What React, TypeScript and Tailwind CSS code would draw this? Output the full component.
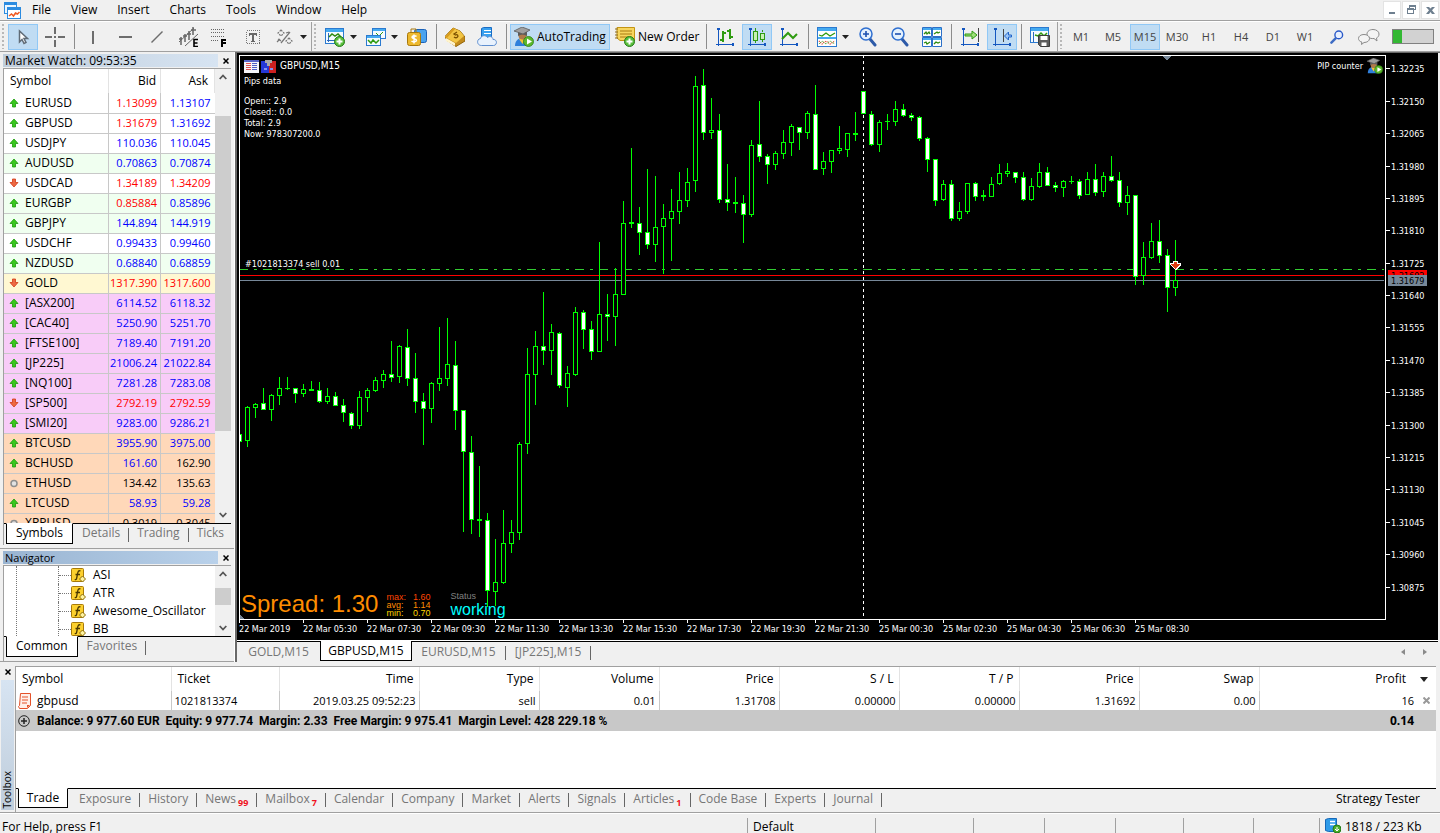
import React from 'react';
import clsx from 'clsx';

type Tone = 'up' | 'down' | 'flat';

interface Quote {
  symbol: string;
  bid: string;
  ask: string;
  trend: Tone;
  bidTone: Tone;
  askTone: Tone;
  bg: string;
}

const WHITE = 'bg-white';
const MINT = 'bg-[#f0fff0]';
const GOLD = 'bg-[#fff8d2]';
const PINK = 'bg-[#f8ccf8]';
const PEACH = 'bg-[#ffd8b9]';

const q = (symbol: string, bid: string, ask: string, trend: Tone, bidTone: Tone, askTone: Tone, bg: string): Quote => ({
  symbol, bid, ask, trend, bidTone, askTone, bg,
});

const quotes: Quote[] = [
  q('EURUSD', '1.13099', '1.13107', 'up', 'down', 'up', WHITE),
  q('GBPUSD', '1.31679', '1.31692', 'up', 'down', 'up', WHITE),
  q('USDJPY', '110.036', '110.045', 'up', 'up', 'up', WHITE),
  q('AUDUSD', '0.70863', '0.70874', 'up', 'up', 'up', MINT),
  q('USDCAD', '1.34189', '1.34209', 'down', 'down', 'down', WHITE),
  q('EURGBP', '0.85884', '0.85896', 'up', 'down', 'up', MINT),
  q('GBPJPY', '144.894', '144.919', 'up', 'up', 'up', MINT),
  q('USDCHF', '0.99433', '0.99460', 'up', 'up', 'up', WHITE),
  q('NZDUSD', '0.68840', '0.68859', 'up', 'up', 'up', MINT),
  q('GOLD', '1317.390', '1317.600', 'down', 'down', 'down', GOLD),
  q('[ASX200]', '6114.52', '6118.32', 'up', 'up', 'up', PINK),
  q('[CAC40]', '5250.90', '5251.70', 'up', 'up', 'up', PINK),
  q('[FTSE100]', '7189.40', '7191.20', 'up', 'up', 'up', PINK),
  q('[JP225]', '21006.24', '21022.84', 'up', 'up', 'up', PINK),
  q('[NQ100]', '7281.28', '7283.08', 'up', 'up', 'up', PINK),
  q('[SP500]', '2792.19', '2792.59', 'down', 'down', 'down', PINK),
  q('[SMI20]', '9283.00', '9286.21', 'up', 'up', 'up', PINK),
  q('BTCUSD', '3955.90', '3975.00', 'up', 'up', 'up', PEACH),
  q('BCHUSD', '161.60', '162.90', 'up', 'up', 'flat', PEACH),
  q('ETHUSD', '134.42', '135.63', 'flat', 'flat', 'flat', PEACH),
  q('LTCUSD', '58.93', '59.28', 'up', 'up', 'up', PEACH),
  q('XRPUSD', '0.3019', '0.3045', 'flat', 'flat', 'flat', PEACH),
];

const toneClass: Record<Tone, string> = {
  up: 'text-[#0000ff]',
  down: 'text-[#ff0000]',
  flat: 'text-black',
};

// one candle per 8px: high, body top, body bottom, low, bearish flag
type Candle = [number, number, number, number, number];

const candles: Candle[] = [
  [434, 434, 442, 442, 1], [406, 407, 441, 447, 0], [403, 404, 408, 418, 0], [388, 403, 410, 410, 1],
  [394, 395, 410, 421, 0], [377, 388, 396, 405, 0], [377, 388, 389, 390, 0], [388, 388, 394, 403, 1],
  [384, 389, 394, 397, 0], [381, 389, 391, 391, 0], [382, 390, 402, 403, 1], [388, 396, 402, 404, 0],
  [392, 396, 406, 406, 1], [399, 405, 413, 422, 1], [412, 413, 426, 429, 1], [391, 397, 426, 429, 0],
  [388, 390, 398, 412, 0], [377, 380, 391, 392, 0], [370, 374, 381, 388, 0], [341, 374, 378, 382, 1],
  [345, 346, 377, 383, 0], [329, 347, 379, 386, 1], [353, 378, 402, 413, 1], [393, 401, 409, 445, 1],
  [382, 383, 409, 423, 0], [327, 378, 384, 391, 0], [318, 364, 379, 386, 0], [341, 365, 411, 430, 1],
  [410, 410, 452, 532, 1], [436, 452, 520, 534, 1], [466, 519, 521, 537, 0], [513, 520, 591, 607, 1],
  [539, 582, 592, 606, 0], [510, 543, 583, 584, 0], [520, 532, 544, 553, 0], [442, 444, 533, 540, 0],
  [348, 374, 444, 454, 0], [331, 346, 375, 405, 0], [292, 346, 351, 365, 1], [324, 332, 351, 375, 0],
  [332, 333, 386, 388, 1], [366, 373, 388, 407, 0], [307, 312, 375, 376, 0], [310, 312, 330, 349, 1],
  [321, 329, 352, 360, 1], [242, 314, 352, 352, 0], [294, 314, 317, 341, 1], [268, 294, 317, 346, 0],
  [201, 223, 295, 295, 0], [148, 222, 224, 228, 0], [207, 223, 233, 255, 1], [169, 232, 245, 249, 1],
  [176, 227, 245, 262, 0], [204, 218, 227, 274, 0], [189, 211, 219, 261, 0], [172, 200, 212, 224, 0],
  [168, 182, 201, 207, 0], [76, 86, 181, 192, 0], [69, 85, 133, 140, 1], [98, 130, 133, 139, 0],
  [114, 130, 200, 203, 1], [164, 199, 203, 211, 1], [177, 202, 204, 213, 0], [195, 203, 215, 243, 1],
  [140, 145, 215, 217, 0], [101, 144, 157, 162, 1], [154, 156, 165, 184, 1], [151, 153, 165, 170, 0],
  [130, 142, 154, 159, 0], [124, 126, 143, 156, 0], [127, 127, 133, 150, 1], [111, 113, 133, 139, 0],
  [85, 114, 170, 170, 1], [152, 161, 169, 175, 0], [150, 150, 162, 173, 0], [126, 148, 151, 154, 0],
  [133, 133, 150, 157, 0], [112, 133, 135, 141, 0], [91, 91, 114, 114, 1], [111, 114, 145, 146, 1],
  [120, 122, 145, 152, 0], [114, 121, 122, 130, 0], [101, 109, 122, 126, 0], [104, 109, 116, 117, 1],
  [113, 115, 118, 121, 1], [116, 117, 139, 141, 1], [137, 138, 160, 172, 1], [159, 159, 201, 206, 1],
  [180, 184, 200, 201, 0], [180, 184, 219, 221, 1], [202, 211, 219, 221, 0], [183, 183, 212, 214, 0],
  [182, 183, 197, 201, 1], [190, 195, 197, 201, 0], [177, 184, 197, 197, 0], [164, 173, 184, 185, 0],
  [163, 171, 174, 177, 0], [172, 172, 178, 183, 1], [172, 177, 200, 201, 1], [178, 186, 200, 201, 0],
  [163, 172, 187, 188, 0], [167, 172, 186, 186, 1], [182, 185, 188, 192, 1], [180, 181, 188, 197, 0],
  [176, 181, 182, 184, 0], [179, 181, 196, 199, 1], [172, 179, 195, 195, 0], [164, 179, 193, 196, 1],
  [172, 176, 192, 197, 0], [156, 176, 181, 182, 1], [172, 180, 203, 207, 1], [186, 195, 203, 215, 0],
  [195, 195, 277, 285, 1], [242, 257, 276, 285, 0], [223, 241, 258, 259, 0], [220, 241, 256, 263, 1],
  [249, 255, 288, 312, 1], [240, 280, 288, 296, 0],
];

const prices: [string, number][] = [
  ['1.32235', 68], ['1.32150', 101], ['1.32065', 133], ['1.31980', 166], ['1.31895', 198], ['1.31810', 230],
  ['1.31725', 263], ['1.31640', 295], ['1.31555', 327], ['1.31470', 360], ['1.31385', 392], ['1.31300', 425],
  ['1.31215', 457], ['1.31130', 489], ['1.31045', 522], ['1.30960', 554], ['1.30875', 587],
];

const times = [
  '22 Mar 2019', '22 Mar 05:30', '22 Mar 07:30', '22 Mar 09:30', '22 Mar 11:30', '22 Mar 13:30', '22 Mar 15:30',
  '22 Mar 17:30', '22 Mar 19:30', '22 Mar 21:30', '25 Mar 00:30', '25 Mar 02:30', '25 Mar 04:30', '25 Mar 06:30',
  '25 Mar 08:30',
];

const Svg = ({ children, size = 20, crisp = false }: { children: React.ReactNode; size?: number; crisp?: boolean }) => (
  <svg width={size} height={size} viewBox="0 0 20 20" fill="none" className="shrink-0" shapeRendering={crisp ? 'crispEdges' : 'auto'} aria-hidden="true">
    {children}
  </svg>
);

const Student = ({ size = 20 }: { size?: number }) => (
  <Svg size={size}>
    <path d="M1 19c0-5 3-8 7-8 5 0 7 3 7 8z" fill="#2f7fdb" />
    <path d="M5 12l3.500 5 3-5z" fill="#f3c13a" />
    <circle cx="8.500" cy="8.500" r="4" fill="#b07a4a" />
    <path d="M4 5v4c3-2 6-2 9 0V5z" fill="#5c5c5c" />
    <path d="M0 4l8-4 8 3-7 4z" fill="#a0a0a0" stroke="#5a5a5a" strokeWidth=".8" />
    <circle cx="14.500" cy="14.500" r="5" fill="#5cb82c" stroke="#2c8012" strokeWidth=".8" />
    <path d="M13 11.500v6l5-3z" fill="#fff" />
  </Svg>
);

const PlusBadge = () => (
  <>
    <circle cx="14.500" cy="14.500" r="5" fill="#5abf3c" stroke="#237a17" />
    <path d="M14.500 11.500v6M11.500 14.500h6" stroke="#fff" strokeWidth="2" />
  </>
);

const Axes = ({ children }: { children?: React.ReactNode }) => (
  <Svg crisp>
    <path d="M3 1v18M1 17h18" stroke="#1457c0" />
    <path d="M2 1h3v2H2zM17 16h2v3h-2z" fill="#1457c0" />
    {children}
  </Svg>
);

const icons = {
  cursor: (
    <Svg><path d="M6.500 4v11l2.500-2.500 2 4 2-1-2-4h3.500z" fill="#fff" stroke="#5f6b76" strokeWidth="1.500" /></Svg>
  ),
  crosshair: (
    <Svg crisp><path d="M10 0v7M10 13v7M0 10h7M13 10h7M9 10h2" stroke="#6d6d6d" strokeWidth="1.500" /></Svg>
  ),
  vline: <Svg crisp><path d="M10 4v13" stroke="#6d6d6d" strokeWidth="1.500" /></Svg>,
  hline: <Svg crisp><path d="M4 10h13" stroke="#6d6d6d" strokeWidth="1.500" /></Svg>,
  trend: <Svg><path d="M4.500 15.500l11-11" stroke="#6d6d6d" strokeWidth="1.500" /></Svg>,
  channel: (
    <Svg>
      <path d="M0 15L15 1M6 19L19 7" stroke="#666" />
      <path d="M2 10v8M0 12h3M6 7v8M4 9h4M10 4v9M8 7h4M14 0v8M12 3h5" stroke="#666" strokeWidth="1.500" />
      <path d="M19 12.500h-4v7h4M15 16h3.500" stroke="#000" strokeWidth="1.600" />
    </Svg>
  ),
  fibo: (
    <Svg crisp>
      <path d="M0 2.500h14M0 5.500h14M0 9.500h14M0 13.500h8" stroke="#666" strokeDasharray="1 1" />
      <path d="M15 12.500h-4v7M11 16h3.500" stroke="#000" strokeWidth="2" />
    </Svg>
  ),
  text: (
    <Svg crisp>
      <rect x="3.500" y="3.500" width="13" height="13" stroke="#777" strokeDasharray="1 1" />
      <path d="M6 7h8M10 7v8M8 14.500h4M6.500 6v3M13.500 6v3" stroke="#666" strokeWidth="1.500" />
    </Svg>
  ),
  shapes: (
    <Svg>
      <path d="M6 3l3 3-3 3-3-3zM14 11l3 3-3 3-3-3z" stroke="#777" strokeWidth="1.200" strokeDasharray="2 1" />
      <path d="M6 16L15 5M3 12l3 2M11 6l3-1M2 15l3-3" stroke="#777" strokeWidth="1.200" />
    </Svg>
  ),
  newChart: (
    <Svg>
      <rect x=".5" y="1.500" width="18" height="15" fill="#f4fbff" stroke="#2b7ad0" />
      <path d="M1 2h17v3H1z" fill="#45aaf0" />
      <path d="M3.500 6v9M2 13.500h13" stroke="#2b6ac0" />
      <path d="M4 10l3-3 3 2 3-2 3 3" stroke="#2e8b10" strokeWidth="1.500" />
      <PlusBadge />
    </Svg>
  ),
  profiles: (
    <Svg>
      <rect x="6.500" y="1.500" width="13" height="10" fill="#f4fbff" stroke="#2b7ad0" />
      <path d="M7 2h12v2H7z" fill="#45aaf0" />
      <path d="M10 6l3 3 4-4" stroke="#2e9b10" />
      <rect x=".5" y="8.500" width="14" height="10" fill="#f4fbff" stroke="#2b7ad0" />
      <path d="M1 9h13v2H1z" fill="#45aaf0" />
      <path d="M2 13l3 3 2-3 3 3 3-3" stroke="#2e9b10" strokeWidth="1.500" />
    </Svg>
  ),
  market: (
    <Svg>
      <rect x="7.500" y="2.500" width="12" height="13" rx="2" fill="#4aa3ee" stroke="#1c62b8" />
      <rect x=".5" y="5.500" width="13" height="13" rx="2" fill="#edb92e" stroke="#a8780c" />
      <path d="M9.500 9.500c-1-1-4.500-1-4.500.8s4.500 1.200 4.500 3-3.500 2-5 .7M7 7.500v9" stroke="#fff" strokeWidth="1.500" />
      <path d="M4 5V2h5v3" stroke="#a8780c" />
    </Svg>
  ),
  gold: (
    <Svg>
      <path d="M0 9.500L8 1l7 3 5 6v4l-9 5.500-9-6z" fill="#c48c1c" stroke="#93650c" />
      <path d="M1 14l9 5v-3l-9-5z" fill="#fff4cc" />
      <path d="M0 10L8 1l7 3 4 5-8 7z" fill="#f2c544" />
      <path d="M8 1L0 10l2 1 8-9z" fill="#d89c1e" />
      <path d="M12 5L9 7l1.500 1c2-1 3.500 1 1.500 2.500-1 .6-2 .2-3-.5" stroke="#7a5000" strokeWidth="1.300" />
    </Svg>
  ),
  cloud: (
    <Svg>
      <path d="M4.500 1.500l2-1h8v12h-10z" fill="#39a0ef" stroke="#1a6cc4" />
      <path d="M7 3.500h7M7 6.500h7" stroke="#fff" />
      <path d="M4.500 18.500C-.5 18.500-.5 12 3.500 11.500 4 8.500 8.500 7.500 10.500 10.500 13 8.500 16 10 16 12.500c4.500-.5 4.500 6 .5 6z" fill="#e9f2fd" stroke="#5f8fd0" />
    </Svg>
  ),
  newOrder: (
    <Svg>
      <path d="M2 .5h17.500v13H5L2 11z" fill="#f7d55e" stroke="#c39413" />
      <path d="M5 4h12M5 7h12M5 10h8" stroke="#a87b10" />
      <path d="M0 2h3M0 5h3M0 8h3M0 11h3" stroke="#8b6a20" />
      <PlusBadge />
    </Svg>
  ),
  bars: (
    <Axes><path d="M8 4v11M5 13h3M8 6h3M15 2v10M12 4h3M15 10h3" stroke="#2e9b10" strokeWidth="2" /></Axes>
  ),
  candles: (
    <Axes>
      <path d="M8.500 1v3M8.500 13v3M15.500 3v2M15.500 13v2" stroke="#2e9b10" />
      <path d="M6.500 4.500h4v9h-4zM13.500 6.500h4v6h-4z" stroke="#2e9b10" fill="#c9efb4" />
    </Axes>
  ),
  line: <Axes><path d="M3 12l6-6 5 5 4-4" stroke="#2e9b10" strokeWidth="2" shapeRendering="auto" /></Axes>,
  indicators: (
    <Svg>
      <rect x=".5" y=".5" width="19" height="19" fill="#fff" stroke="#2b7ad0" />
      <path d="M1 1h18v3H1zM1 10h18v2H1z" fill="#45aaf0" />
      <path d="M2 8l3 1 4-3 4 3 5-3" stroke="#2e9b10" strokeWidth="1.300" />
      <path d="M2 14l3 3 4-3 4 3 5-3" stroke="#e2442a" strokeDasharray="1 1" strokeWidth="1.300" />
      <path d="M2 17l3-3 4 3 4-3 5 3" stroke="#2e9b10" strokeDasharray="1 1" />
    </Svg>
  ),
  zoomIn: (
    <Svg>
      <path d="M12 12l5 6" stroke="#2d5aa8" strokeWidth="3" strokeLinecap="round" />
      <circle cx="8" cy="7" r="6" fill="#e4f1fd" stroke="#2f6fd0" strokeWidth="1.500" />
      <path d="M8 4v6M5 7h6" stroke="#1c50b0" strokeWidth="1.600" />
    </Svg>
  ),
  zoomOut: (
    <Svg>
      <path d="M12 12l5 6" stroke="#2d5aa8" strokeWidth="3" strokeLinecap="round" />
      <circle cx="8" cy="7" r="6" fill="#e4f1fd" stroke="#2f6fd0" strokeWidth="1.500" />
      <path d="M5 7h6" stroke="#1c50b0" strokeWidth="1.600" />
    </Svg>
  ),
  tile: (
    <Svg>
      <path d="M.5.500h9v9h-9zM10.500.500h9v9h-9zM.5 10.500h9v9h-9zM10.500 10.500h9v9h-9z" fill="#fff" stroke="#2b6fc8" />
      <path d="M1 1h8v2H1zM11 1h8v2h-8zM1 11h8v2H1zM11 11h8v2h-8z" fill="#45aaf0" />
      <path d="M2 7l2-2 1 2 2-2 1 2M12 7l3-2 1 1 2-1M2 16l2-1 1 2 3-2M12 17l2-2 2 1 2-1" stroke="#2e8b10" strokeWidth="1.300" />
    </Svg>
  ),
  autoScroll: (
    <Axes>
      <path d="M18.500 1v14" stroke="#444" />
      <path d="M5 7h7V4l5 4-5 4V9H5z" fill="#9fe07a" stroke="#2e9b10" shapeRendering="auto" />
    </Axes>
  ),
  shift: (
    <Axes>
      <path d="M11.500 2v13" stroke="#444" />
      <path d="M19.500 8h-3V5l-4 4 4 4v-3h3z" fill="#9cc6f6" stroke="#1f62c8" shapeRendering="auto" />
    </Axes>
  ),
  template: (
    <Svg>
      <rect x=".5" y=".5" width="18" height="15" fill="#f4fbff" stroke="#2b7ad0" />
      <path d="M1 1h17v3H1z" fill="#45aaf0" />
      <path d="M3.500 5v10" stroke="#2b6ac0" />
      <path d="M5 8l3 1 3-3 3 3 3-3" stroke="#2e9b10" strokeWidth="1.500" />
      <path d="M8.500 8.500h11v11h-9l-2-2z" fill="#5d5d5d" stroke="#3d3d3d" />
      <path d="M10.500 9h7v4h-7zM11.500 15.500h5V19h-5z" fill="#fff" />
    </Svg>
  ),
  search: (
    <Svg size={14}>
      <path d="M8 12l-6 6" stroke="#3d6cc4" strokeWidth="3.500" strokeLinecap="round" />
      <circle cx="12.500" cy="7" r="5.500" fill="#e8f0ff" stroke="#2858c8" strokeWidth="2" />
    </Svg>
  ),
  chat: (
    <svg width="22" height="16" viewBox="0 0 22 16" fill="#f4f4f4" stroke="#8a8a8a" aria-hidden="true">
      <path d="M15 .5c3.500 0 6 2 6 4.500 0 2-1 3.200-2.500 4l.5 3-3-2.500C11 10 9 7.500 9 5S11.500.5 15 .5z" />
      <path d="M6 5.500c3 0 5.500 1.500 5.500 4S9 13.500 6 13.500L3.500 15.500l.3-2.500C1.500 12.500.5 11 .5 9.500c0-2.500 2.500-4 5.500-4z" />
    </svg>
  ),
};

const Arrow = ({ trend }: { trend: Tone }) => {
  if (trend === 'flat') {
    return (
      <svg width="10" height="10" viewBox="0 0 10 10" aria-hidden="true">
        <circle cx="5" cy="5.500" r="3" fill="#e2e2e2" stroke="#8e8e8e" strokeWidth="1.500" />
      </svg>
    );
  }
  return (
    <svg width="10" height="10" viewBox="0 0 10 10" aria-hidden="true">
      {trend === 'up' ? (
        <path d="M5 1L9 5.500H6.500V9h-3V5.500H1z" fill="#38c81c" stroke="#1c9a0a" strokeWidth=".8" />
      ) : (
        <path d="M5 9L9 4.500H6.500V1h-3v3.500H1z" fill="#ee6a44" stroke="#d23a14" strokeWidth=".8" />
      )}
    </svg>
  );
};

const ToolButton = ({ label, children, active }: { label: string; children: React.ReactNode; active?: boolean }) => (
  <button
    type="button"
    aria-label={label}
    className={clsx(
      'mx-px flex h-[26px] w-[30px] shrink-0 items-center justify-center border text-[11px] text-[#444]',
      active ? 'border-[#90c8f6] bg-[#c0dcf3]' : 'border-transparent',
    )}
  >
    {children}
  </button>
);

const Caret = ({ label }: { label: string }) => (
  <button type="button" aria-label={label} className="-ml-1 flex h-[26px] w-[13px] shrink-0 items-center justify-center">
    <svg width="7" height="4" viewBox="0 0 7 4" aria-hidden="true"><path d="M0 0h7L3.500 4z" fill="#222" /></svg>
  </button>
);

const Sep = () => (
  <span className="flex w-[6px] shrink-0 justify-center self-stretch py-0.5"><span className="w-px bg-[#8c8c8c]" /></span>
);

const Grip = ({ first }: { first?: boolean }) => (
  <span className={clsx('flex shrink-0 justify-end self-stretch py-0.5 pr-[3px]', first ? 'w-[7px]' : 'ml-px w-2 border-l border-[#a0a0a0]')}>
    <span className="w-0.5 bg-[repeating-linear-gradient(to_bottom,#b8b8b8_0_2px,transparent_2px_4px)]" />
  </span>
);

const MenuBar = () => (
  <header className="flex h-[21px] shrink-0 items-center border-b border-[#a0a0a0]">
    <svg width="17" height="17" viewBox="0 0 17 17" className="ml-1" aria-hidden="true">
      <rect x=".5" y=".5" width="12" height="11" fill="#eaf6ff" stroke="#2b8be0" />
      <path d="M1 1h11v2H1z" fill="#2b8be0" />
      <rect x="3.500" y="5.500" width="13" height="11" fill="#fff" stroke="#2b8be0" />
      <path d="M4 6h12v2H4z" fill="#2b8be0" />
      <path d="M5 14l2.500-2 2 2 2-3 2 1 2-2" stroke="#f05a22" strokeWidth="1.500" fill="none" />
    </svg>
    <nav className="flex flex-1 pl-px" aria-label="Main menu">
      {['File', 'View', 'Insert', 'Charts', 'Tools', 'Window', 'Help'].map((item) => (
        <button key={item} type="button" className="px-[10px] leading-5">{item}</button>
      ))}
    </nav>
    <div className="flex gap-px pr-px">
      {[
        ['Minimize', 'M4 9h6v2H4z'],
        ['Restore', 'M5 2h7v5h-2v4H3V5h2zM6 4v1h4v1h1V4zM4 7v3h5V7z'],
        ['Close', 'M3 4h3l1.500 1.500L9 4h3L9 7.200 12 11H9L7.500 9 6 11H3l3-3.800z'],
      ].map(([label, d]) => (
        <button key={label} type="button" aria-label={label} className="flex h-[18px] w-[18px] items-center justify-center border border-[#e3e3e3] bg-white">
          <svg width="14" height="14" viewBox="0 0 14 14" className="shrink-0" aria-hidden="true"><path d={d} fill="#6e7f8f" fillRule="evenodd" /></svg>
        </button>
      ))}
    </div>
  </header>
);

const Toolbar = () => (
  <div role="toolbar" aria-label="Standard" className="flex h-[31px] shrink-0 items-center border-y border-t-white border-b-[#a0a0a0]">
    <Grip first />
    <ToolButton label="Cursor" active>{icons.cursor}</ToolButton>
    <ToolButton label="Crosshair">{icons.crosshair}</ToolButton>
    <Sep />
    <ToolButton label="Vertical line">{icons.vline}</ToolButton>
    <ToolButton label="Horizontal line">{icons.hline}</ToolButton>
    <ToolButton label="Trendline">{icons.trend}</ToolButton>
    <ToolButton label="Equidistant channel">{icons.channel}</ToolButton>
    <ToolButton label="Fibonacci retracement">{icons.fibo}</ToolButton>
    <ToolButton label="Text">{icons.text}</ToolButton>
    <ToolButton label="Shapes">{icons.shapes}</ToolButton>
    <Caret label="More shapes" />
    <Grip />
    <ToolButton label="New chart">{icons.newChart}</ToolButton>
    <Caret label="Chart symbols" />
    <ToolButton label="Profiles">{icons.profiles}</ToolButton>
    <Caret label="Profile list" />
    <ToolButton label="Market">{icons.market}</ToolButton>
    <Sep />
    <ToolButton label="MetaEditor">{icons.gold}</ToolButton>
    <ToolButton label="Virtual hosting">{icons.cloud}</ToolButton>
    <Sep />
    <button type="button" className="mx-px flex h-[26px] w-[100px] shrink-0 items-center gap-[3px] border border-[#90c8f6] bg-[#c0dcf3] pl-[3px] whitespace-nowrap">
      <Student />AutoTrading
    </button>
    <button type="button" className="mx-px flex h-[26px] w-[90px] shrink-0 items-center gap-[3px] pl-[3px] whitespace-nowrap">
      {icons.newOrder}New Order
    </button>
    <Sep />
    <ToolButton label="Bar chart">{icons.bars}</ToolButton>
    <ToolButton label="Candlesticks" active>{icons.candles}</ToolButton>
    <ToolButton label="Line chart">{icons.line}</ToolButton>
    <Sep />
    <ToolButton label="Indicators">{icons.indicators}</ToolButton>
    <Caret label="Indicator list" />
    <ToolButton label="Zoom in">{icons.zoomIn}</ToolButton>
    <ToolButton label="Zoom out">{icons.zoomOut}</ToolButton>
    <ToolButton label="Tile windows">{icons.tile}</ToolButton>
    <Sep />
    <ToolButton label="Auto scroll">{icons.autoScroll}</ToolButton>
    <ToolButton label="Chart shift" active>{icons.shift}</ToolButton>
    <Sep />
    <ToolButton label="Templates">{icons.template}</ToolButton>
    <Grip />
    {['M1', 'M5', 'M15', 'M30', 'H1', 'H4', 'D1', 'W1'].map((tf) => (
      <ToolButton key={tf} label={tf} active={tf === 'M15'}>{tf}</ToolButton>
    ))}
    <ToolButton label="Search">{icons.search}</ToolButton>
    <ToolButton label="Chat">{icons.chat}</ToolButton>
    <div className="ml-auto mr-1.5 h-[15px] w-[42px] shrink-0 border border-[#808080] bg-[#d2d2d2]">
      <div className="h-full w-[9px] bg-[#33b833]" />
    </div>
  </div>
);

const CloseButton = () => (
  <button type="button" aria-label="Close panel" className="flex h-3 w-4 items-center justify-center">
    <svg width="6" height="6" viewBox="0 0 6 6" aria-hidden="true"><path d="M.5.500l5 5M5.500.500l-5 5" stroke="#000" strokeWidth="1.500" /></svg>
  </button>
);

const Chevron = ({ down }: { down?: boolean }) => (
  <button type="button" aria-label={down ? 'Scroll down' : 'Scroll up'} className="flex h-4 w-full shrink-0 items-center justify-center">
    <svg width="8" height="6" viewBox="0 0 8 6" fill="none" aria-hidden="true">
      <path d={down ? 'M.7 1L4 4.500 7.300 1' : 'M.7 5L4 1.500 7.300 5'} stroke="#555" strokeWidth="1.800" />
    </svg>
  </button>
);

const PanelTabs = ({ tabs, closed }: { tabs: string[]; closed?: boolean }) => (
  <div className="flex h-5 items-start border-t border-black pl-0.5 text-[#767676]">
    {tabs.map((tab, i) => (
      <React.Fragment key={tab}>
        {i > 1 && <span className="mt-1 h-3.5 w-px shrink-0 bg-[#666]" />}
        <button
          type="button"
          className={clsx(
            'pb-px leading-[18px]',
            i === 0 ? '-mt-px mr-px border border-t-white border-black bg-white px-[9px] text-black' : 'px-2',
          )}
        >
          {tab}
        </button>
      </React.Fragment>
    ))}
    {closed && <span className="mt-1 h-3.5 w-px shrink-0 bg-[#666]" />}
  </div>
);

const MarketWatch = () => (
  <section className="flex min-h-0 flex-1 flex-col border-b border-[#a0a0a0] pl-[3px]" aria-label="Market Watch">
    <div className="mt-0.5 flex h-[13px] shrink-0 items-center">
      <h2 className="flex-1 bg-linear-to-r from-[#bfcddb] to-[#d7e4f2] pl-0.5 leading-[13px]">Market Watch: 09:53:35</h2>
      <CloseButton />
    </div>
    <div className="mt-px mr-[3px] flex min-h-0 flex-1 flex-col border-t border-l border-[#a0a0a0]">
      <div className="flex min-h-0 flex-1 overflow-hidden bg-white">
        <div className="min-h-0 flex-1 overflow-hidden">
          <table className="w-full table-fixed border-collapse">
            <thead>
              <tr className="h-6 text-left">
                <th className="border-r border-[#e3e3e3] pl-1.5 font-normal">Symbol</th>
                <th className="w-[52px] border-r border-[#e3e3e3] pr-1 text-right font-normal">Bid</th>
                <th className="w-[54px] border-r border-[#e3e3e3] pr-1.5 text-right font-normal">Ask</th>
              </tr>
            </thead>
            <tbody>
              {quotes.map((item) => (
                <tr key={item.symbol} className={clsx('h-5', item.bg)}>
                  <td className="border-r border-b border-[#c8c8c8] p-0 pl-[5px]">
                    <span className="flex items-center gap-1.5 leading-4"><Arrow trend={item.trend} />{item.symbol}</span>
                  </td>
                  <td className={clsx('border-r border-b border-[#c8c8c8] p-0 pr-[3px] text-right text-[11px]', toneClass[item.bidTone])}>{item.bid}</td>
                  <td className={clsx('border-b border-[#c8c8c8] p-0 pr-1 text-right text-[11px]', toneClass[item.askTone])}>{item.ask}</td>
                </tr>
              ))}
            </tbody>
          </table>
        </div>
        <div className="flex w-4 shrink-0 flex-col bg-[#f0f0f0]">
          <Chevron />
          <div className="mt-[31px] h-[315px] bg-[#cdcdcd]" />
          <div className="flex-1" />
          <Chevron down />
        </div>
      </div>
      <PanelTabs tabs={['Symbols', 'Details', 'Trading', 'Ticks']} />
      <div className="h-0.5" />
    </div>
    <div className="h-[3px]" />
  </section>
);

const FunctionIcon = () => (
  <svg width="15" height="15" viewBox="0 0 15 15" aria-hidden="true">
    <rect x=".5" y=".5" width="12" height="13" rx="1" fill="#fcd02e" stroke="#a87a08" />
    <path d="M9.500 3c-2-.8-2.500.5-3 3L5.700 10c-.3 1.500-1 1.800-2 1.500M4.500 6.500h4.500" stroke="#4a3800" strokeWidth="1.300" fill="none" />
    <path d="M11.500 8l3 3-3 3-3-3z" fill="#fff3a0" stroke="#8a6a08" />
  </svg>
);

const Navigator = () => (
  <section className="shrink-0 border-b border-[#a0a0a0] pl-[3px]" aria-label="Navigator">
    <div className="mt-0.5 flex h-[13px] items-center">
      <h2 className="flex-1 bg-linear-to-r from-[#99b4d1] to-[#b9d1ea] pl-0.5 text-[11px] leading-[13px]">Navigator</h2>
      <CloseButton />
    </div>
    <div className="mt-px mr-[3px] border-t border-l border-[#a0a0a0]">
      <div className="flex h-[70px] bg-white">
        <ul className="ml-3 flex-1 overflow-hidden border-l border-dotted border-[#777]">
          {['ASI', 'ATR', 'Awesome_Oscillator', 'BB'].map((name) => (
            <li key={name} className="ml-[41px] flex h-[18px] items-center border-l border-dotted border-[#777]">
              <span className="w-3 border-t border-dotted border-[#777]" />
              <FunctionIcon />
              <a href="#" className="ml-[7px] leading-[18px]">{name}</a>
            </li>
          ))}
        </ul>
        <div className="flex w-4 shrink-0 flex-col bg-[#f0f0f0]">
          <Chevron />
          <div className="mt-1.5 h-[17px] bg-[#cdcdcd]" />
          <div className="flex-1" />
          <Chevron down />
        </div>
      </div>
      <PanelTabs tabs={['Common', 'Favorites']} closed />
      <div className="h-[5px]" />
    </div>
  </section>
);

const Plot = () => (
  <svg className="absolute inset-0 h-full w-full" shapeRendering="crispEdges" role="img" aria-label="GBPUSD M15 candlestick chart">
    <g transform="translate(-1 -56)">
      <line x1="0" x2="100%" y1="269.500" y2="269.500" stroke="#32cd32" strokeDasharray="9 6 3 6" />
      <line x1="0" x2="100%" y1="275.500" y2="275.500" stroke="#ff0000" />
      <line x1="0" x2="100%" y1="280.500" y2="280.500" stroke="#778899" />
      <line x1="624.500" x2="624.500" y1="55" y2="619" stroke="#fff" strokeDasharray="3 3" />
      {candles.map(([high, top, bottom, low, bear], i) => (
        <g key={i}>
          <rect x={i * 8} y={high} width="1" height={low - high} fill="#00ff00" />
          <rect x={i * 8 - 2} y={top} width="5" height={bottom - top} fill="#00ff00" />
          {bottom - top > 2 && (
            <rect x={i * 8 - 1} y={top + 1} width="3" height={bottom - top - 2} fill={bear ? '#fff' : '#000'} />
          )}
        </g>
      ))}
      <path d="M923 55h10l-5 6z" fill="#778899" />
      <path d="M0 614l5 5H0z" fill="#778899" />
      <path d="M934 261h5v2h3v2l-5 5h-1l-5-5v-2h3z" fill="#fff" />
      <path d="M935 262h3v2h3v1h-1v1h-1v1h-1v1h-1v1h-1v-1h-1v-1h-1v-1h-1v-1h-1v-1h3z" fill="#e03c14" />
    </g>
  </svg>
);

const Chart = () => (
  <div className="flex min-h-0 flex-1 flex-col bg-black pt-0.5 pl-0.5 text-[10px] text-white">
    <div className="flex min-h-0 flex-1">
      <div className="relative flex-1 overflow-hidden border border-white font-['DejaVu_Sans_Condensed','DejaVu_Sans',sans-serif] text-[9px]">
        <Plot />
        <div className="absolute top-[2px] left-1">
          <div className="flex h-4 items-center gap-[2px]">
            <svg width="15" height="13" viewBox="0 0 15 13" shapeRendering="crispEdges" aria-hidden="true">
              <path d="M0 0h15v13H0z" fill="#f4f4f8" />
              <path d="M0 0h15v2H0z" fill="#5a66c8" />
              <path d="M2 3h5v1H2zM2 5h5v1H2zM2 7h5v1H2zM2 9h5v1H2z" fill="#e05050" />
              <path d="M8 3h5v1H8zM8 5h5v1H8zM8 7h5v1H8zM8 9h5v1H8z" fill="#5060c8" />
            </svg>
            <svg width="15" height="13" viewBox="0 0 15 13" aria-hidden="true">
              <path d="M0 1h8v12H0z" fill="#2438d8" />
              <path d="M8 1h7v12H8z" fill="#cc2020" />
              <path d="M4 0h7v3H9v3H6V3H4z" fill="#a8a8a8" />
              <path d="M3 8h3v2H3zM9 8h3v2H9z" fill="#8890f0" />
            </svg>
            <span className="ml-0.5 text-[10px]">GBPUSD,M15</span>
          </div>
          <p className="leading-[14px]">Pips data</p>
          <p className="mt-2 leading-[11px]">Open:: 2.9</p>
          <p className="leading-[11px]">Closed:: 0.0</p>
          <p className="leading-[11px]">Total: 2.9</p>
          <p className="leading-[11px]">Now: 978307200.0</p>
        </div>
        <div className="absolute top-0.5 right-0.5 flex items-center gap-1"><span>PIP counter</span><Student size={16} /></div>
        <p className="absolute top-[202px] left-[5px] leading-3">#1021813374 sell 0.01</p>
        <div className="absolute bottom-0 left-px flex items-end font-['Liberation_Sans',Arial,sans-serif]">
          <span className="text-[24px] leading-[30px] text-[#ff8c00]">Spread: 1.30</span>
          <dl className="mb-0.5 ml-2 grid grid-cols-[22px_22px] text-[9px] leading-2">
            <dt className="text-[#ff4500]">max:</dt><dd className="text-right text-[#ff4500]">1.60</dd>
            <dt className="text-[#ff8c00]">avg:</dt><dd className="text-right text-[#ff8c00]">1.14</dd>
            <dt className="text-[#ffd700]">min:</dt><dd className="text-right text-[#ffd700]">0.70</dd>
          </dl>
          <div className="ml-5">
            <p className="text-[9px] leading-[10px] text-[#808080]">Status</p>
            <p className="text-[16px] leading-[18px] text-[#00ffff]">working</p>
          </div>
        </div>
      </div>
      <svg className="w-[52px] font-['DejaVu_Sans_Condensed','DejaVu_Sans',sans-serif]" fontSize="9" fill="#fff" aria-label="Price scale">
        <g transform="translate(0 -55)">
          {prices.map(([label, y]) => (
            <g key={label}>
              <rect x="0" y={y} width="4" height="1" />
              <text x="5" y={y + 4}>{label}</text>
            </g>
          ))}
          <rect x="2" y="270" width="39" height="8" fill="#ff0000" />
          <text x="5" y="279" fill="#000">1.31692</text>
          <rect x="2" y="275" width="39" height="11" fill="#778899" />
          <text x="5" y="284" fill="#000">1.31679</text>
        </g>
      </svg>
    </div>
    <svg className="h-5 w-full shrink-0 font-['DejaVu_Sans_Condensed','DejaVu_Sans',sans-serif]" fontSize="9" fill="#fff" aria-label="Time scale">
      {times.map((label, i) => (
        <g key={label}>
          <rect x={i * 64} y="0" width="1" height="3" />
          <text x={i * 64} y="12">{label}</text>
        </g>
      ))}
    </svg>
  </div>
);

const ChartTabs = () => (
  <div className="flex h-[22px] shrink-0 flex-col border-t border-white">
    <div className="flex h-5 items-start border-t border-black text-[#767676]">
      <button type="button" className="w-[83px] leading-[19px]">GOLD,M15</button>
      <button type="button" className="-mt-px h-5 w-[92px] border border-t-0 border-black bg-white leading-[19px] text-black">GBPUSD,M15</button>
      <button type="button" className="w-[93px] leading-[19px]">EURUSD,M15</button>
      <span className="mt-1 h-3.5 w-px bg-[#666]" />
      <button type="button" className="w-[84px] leading-[19px]">[JP225],M15</button>
      <span className="mt-1 h-3.5 w-px bg-[#666]" />
      <div className="ml-auto flex h-full items-center gap-[18px] pr-[11px]">
        <button type="button" aria-label="Previous tab"><svg width="4" height="6" viewBox="0 0 4 6" aria-hidden="true"><path d="M4 0v6L0 3z" fill="#8a8a8a" /></svg></button>
        <button type="button" aria-label="Next tab"><svg width="4" height="6" viewBox="0 0 4 6" aria-hidden="true"><path d="M0 0v6l4-3z" fill="#8a8a8a" /></svg></button>
      </div>
    </div>
  </div>
);

const columns: [string, string, string][] = [
  ['Time', '2019.03.25 09:52:23', 'w-[140px]'],
  ['Type', 'sell', 'w-[120px]'],
  ['Volume', '0.01', 'w-[120px]'],
  ['Price', '1.31708', 'w-[120px]'],
  ['S / L', '0.00000', 'w-[120px]'],
  ['T / P', '0.00000', 'w-[120px]'],
  ['Price', '1.31692', 'w-[120px]'],
  ['Swap', '0.00', 'w-[120px]'],
];

const toolboxTabs: [string, string?][] = [
  ['Exposure'], ['History'], ['News', '99'], ['Mailbox', '7'], ['Calendar'], ['Company'], ['Market'], ['Alerts'],
  ['Signals'], ['Articles', '1'], ['Code Base'], ['Experts'], ['Journal'],
];

const Toolbox = () => (
  <section className="flex shrink-0 border-b border-[#a0a0a0] pt-1 pr-1" aria-label="Toolbox">
    <div className="flex w-[15px] shrink-0 flex-col items-start">
      <CloseButton />
      <div className="mt-0.5 mb-0.5 ml-px flex w-[13px] flex-1 items-center bg-linear-to-b from-[#d7e4f2] to-[#bfcddb] [writing-mode:vertical-rl]">
        <h2 className="mt-auto rotate-180 pt-0.5 text-[10px] leading-[13px]">Toolbox</h2>
      </div>
    </div>
    <div className="min-w-0 flex-1 border-t border-l border-[#a0a0a0]">
      <div className="h-[121px] bg-white">
        <table className="w-full table-fixed border-collapse">
          <thead>
            <tr className="h-6">
              <th className="w-[155px] border-r border-[#e3e3e3] pl-1.5 text-left font-normal">Symbol</th>
              <th className="w-[108px] border-r border-[#e3e3e3] pl-1.5 text-left font-normal">Ticket</th>
              {columns.map(([name, , width], i) => (
                <th key={i} className={clsx('border-r border-[#e3e3e3] pr-[5px] text-right font-normal', width)}>{name}</th>
              ))}
              <th className="pr-2 text-right font-normal">
                <span className="flex items-center justify-end gap-3.5">
                  Profit
                  <svg width="8" height="5" viewBox="0 0 8 5" aria-hidden="true"><path d="M0 0h8L4 5z" fill="#222" /></svg>
                </span>
              </th>
            </tr>
          </thead>
          <tbody>
            <tr className="h-[19px] text-[11px]">
              <td className="border-r border-[#c8c8c8] p-0 pl-0.5">
                <span className="flex items-center gap-1.5 text-[12px] leading-4">
                  <svg width="13" height="16" viewBox="0 0 13 16" fill="none" aria-hidden="true">
                    <path d="M2.500.5h10v12l-3 3h-8l-1-2 1-1z" fill="#fff0ea" stroke="#e4522a" />
                    <path d="M4 4h6M4 7h6M4 10h5" stroke="#e4522a" />
                    <path d="M9 15v-3h3z" fill="#e4522a" />
                  </svg>
                  gbpusd
                </span>
              </td>
              <td className="border-r border-[#c8c8c8] p-0 pl-[3px]">1021813374</td>
              {columns.map(([, value], i) => (
                <td key={i} className="border-r border-[#c8c8c8] p-0 pr-[3px] text-right">{value}</td>
              ))}
              <td className="p-0 pr-1.5">
                <span className="flex items-center justify-end gap-[9px]">
                  16
                  <button type="button" aria-label="Close position">
                    <svg width="7" height="7" viewBox="0 0 7 7" aria-hidden="true"><path d="M.5.500l6 6M6.500.500l-6 6" stroke="#999" strokeWidth="2" /></svg>
                  </button>
                </span>
              </td>
            </tr>
            <tr className="h-[21px] bg-[#c8c8c8] text-[12px] font-bold">
              <td colSpan={10} className="p-0 pl-0.5">
                <span className="flex items-center gap-[7px] font-[Roboto,'Open_Sans',sans-serif] whitespace-pre">
                  <svg width="12" height="12" viewBox="0 0 12 12" fill="none" stroke="#222" aria-hidden="true">
                    <circle cx="6" cy="6" r="5.300" /><path d="M6 3v6M3 6h6" strokeWidth="1.500" />
                  </svg>
                  {'Balance: 9 977.60 EUR  Equity: 9 977.74  Margin: 2.33  Free Margin: 9 975.41  Margin Level: 428 229.18 %'}
                </span>
              </td>
              <td className="p-0 pr-[22px] text-right">0.14</td>
            </tr>
          </tbody>
        </table>
      </div>
      <div className="flex h-6 items-start border-t border-black pl-0.5 text-[#767676]">
        <button type="button" className="-mt-px mr-[3px] h-5 w-[50px] border border-t-white border-black bg-white leading-[18px] text-black">Trade</button>
        {toolboxTabs.map(([name, count]) => (
          <React.Fragment key={name}>
            <button type="button" className="px-2 leading-[19px] whitespace-nowrap">
              {name}
              {count && <span className="relative top-[3px] ml-0.5 text-[9px] leading-none font-bold text-[#f01020]">{count}</span>}
            </button>
            <span className="mt-1 h-3.5 w-px shrink-0 bg-[#666]" />
          </React.Fragment>
        ))}
        <button type="button" className="ml-auto pr-4 leading-5 text-black">Strategy Tester</button>
      </div>
    </div>
  </section>
);

const StatusBar = () => (
  <footer className="flex h-5 shrink-0 items-stretch border-t border-white pt-1 leading-[18px] whitespace-nowrap">
    <span className="flex-1 pl-0.5">For Help, press F1</span>
    <span className="w-32 border-l border-[#a0a0a0] pl-[5px]">Default</span>
    <span className="w-[98px] border-l border-[#a0a0a0]" />
    <span className="w-[71px] border-l border-[#a0a0a0]" />
    <span className="w-[71px] border-l border-[#a0a0a0]" />
    <span className="w-[68px] border-l border-[#a0a0a0]" />
    <span className="w-[70px] border-l border-[#a0a0a0]" />
    <span className="w-[66px] border-l border-[#a0a0a0]" />
    <span className="flex w-[121px] gap-1 border-l border-[#a0a0a0] pl-[5px]">
      <svg width="16" height="15" viewBox="0 0 16 15" aria-hidden="true">
        <path d="M.5 1.500l3-1h8v13h-8l-3-1z" fill="#2f9be8" stroke="#1668b8" />
        <path d="M5 3.500h5M5 6.500h5" stroke="#fff" strokeWidth="1.500" />
        <circle cx="12" cy="11" r="4" fill="#4cae2a" stroke="#237a17" />
        <path d="M12 9v3M10 11l2 2 2-2" stroke="#fff" fill="none" />
      </svg>
      1818 / 223 Kb
    </span>
  </footer>
);

export default function App() {
  return (
    <div className="flex h-screen flex-col overflow-hidden bg-[#f0f0f0] font-['Open_Sans','Noto_Sans',sans-serif] text-[12px] leading-4 text-black">
      <MenuBar />
      <Toolbar />
      <main className="flex min-h-0 flex-1">
        <aside className="flex w-[235px] shrink-0 flex-col border-r border-white">
          <MarketWatch />
          <Navigator />
        </aside>
        <div className="flex min-w-0 flex-1 flex-col border-t border-l-2 border-[#696969] pr-0.5">
          <Chart />
          <ChartTabs />
        </div>
      </main>
      <Toolbox />
      <StatusBar />
    </div>
  );
}
